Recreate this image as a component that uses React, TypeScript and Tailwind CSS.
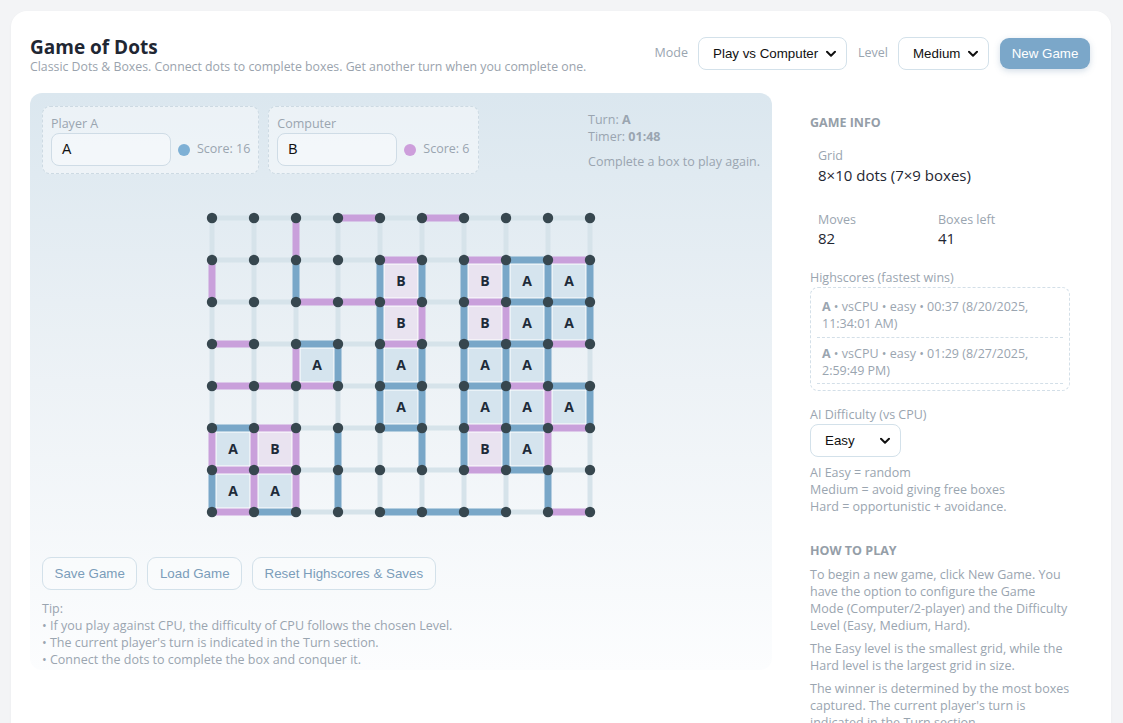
import React from "react";

const H = [
  "...b.b...",
  "....b.bab",
  "..bbb.baa",
  "b.a.b.aab",
  "bbb.a.aba",
  "ab..a.bab",
  "bb....ba.",
  "ba..aaa.b",
];
const V = [
  "..b.......",
  "b.a.aaaaaa",
  "....ababaa",
  "..baaaaaa.",
  "....aaaaba",
  "bbba.aaab.",
  "abba....a.",
];
const B = [
  ".........",
  "....B.BAA",
  "....B.BAA",
  "..A.A.AA.",
  "....A.AAA",
  "AB....BA.",
  "AA.......",
];

const S = 42;
const P = 10;
const BLUE = "#79a7c8";
const PURPLE = "#c9a0db";
const EMPTY = "#d6e3ea";

function col(c: string) {
  return c === "a" ? BLUE : c === "b" ? PURPLE : EMPTY;
}

function Board() {
  const w = 9 * S + 2 * P;
  const h = 7 * S + 2 * P;
  const items: React.ReactNode[] = [];
  B.forEach((row, r) =>
    row.split("").forEach((ch, c) => {
      if (ch === ".") return;
      const x = P + c * S;
      const y = P + r * S;
      items.push(
        <g key={`b${r}-${c}`}>
          <rect
            x={x + 4}
            y={y + 4}
            width={34}
            height={34}
            fill={ch === "A" ? "#d5e4ee" : "#e9e3f0"}
            stroke="#ffffff"
            strokeWidth={1}
          />
          <text
            x={x + 21}
            y={y + 26}
            textAnchor="middle"
            fontSize="14"
            fontWeight="700"
            fill="#1e2b3a"
            fontFamily="'Open Sans', sans-serif"
          >
            {ch}
          </text>
        </g>
      );
    })
  );
  H.forEach((row, r) =>
    row.split("").forEach((ch, c) => {
      const y = P + r * S;
      items.push(
        <line
          key={`h${r}-${c}`}
          x1={P + c * S}
          x2={P + (c + 1) * S}
          y1={y}
          y2={y}
          stroke={col(ch)}
          strokeWidth={ch === "." ? 5 : 7}
        />
      );
    })
  );
  V.forEach((row, r) =>
    row.split("").forEach((ch, c) => {
      const x = P + c * S;
      items.push(
        <line
          key={`v${r}-${c}`}
          x1={x}
          x2={x}
          y1={P + r * S}
          y2={P + (r + 1) * S}
          stroke={col(ch)}
          strokeWidth={ch === "." ? 5 : 7}
        />
      );
    })
  );
  for (let r = 0; r < 8; r++)
    for (let c = 0; c < 10; c++)
      items.push(<circle key={`d${r}-${c}`} cx={P + c * S} cy={P + r * S} r={5.2} fill="#37474f" />);
  return (
    <svg width={w} height={h} viewBox={`0 0 ${w} ${h}`}>
      {items}
    </svg>
  );
}

function Chevron() {
  return (
    <svg
      className="pointer-events-none absolute right-[10px] top-1/2 -translate-y-1/2"
      width="10"
      height="7"
      viewBox="0 0 10 7"
    >
      <path d="M1 1.2 L5 5.2 L9 1.2" fill="none" stroke="#111" strokeWidth="2" strokeLinecap="round" strokeLinejoin="round" />
    </svg>
  );
}

function Select({ value, w }: { value: string; w: string }) {
  return (
    <div className={`relative h-[33px] ${w} rounded-[8px] border border-[#d3e1ea] bg-white`}>
      <div className="flex h-full items-center pl-[14px] font-['Liberation_Sans',Arial,sans-serif] text-[13.33px] text-[#111]">
        {value}
      </div>
      <Chevron />
    </div>
  );
}

function PlayerCard({ label, value, color, score }: { label: string; value: string; color: string; score: string }) {
  return (
    <div className="rounded-[8px] border border-dashed border-[#cddae3] bg-white/45 px-[8px] pt-[9px] pb-[7px]">
      <div className="text-[12.5px] leading-[16px] text-[#9aa5b0]">{label}</div>
      <div className="mt-[1px] flex items-center whitespace-nowrap">
        <div className="flex h-[33px] w-[120px] items-center rounded-[8px] border border-[#cfdce6] bg-white/35 pl-[10px] font-['Liberation_Sans',Arial,sans-serif] text-[14px] text-[#111]">
          {value}
        </div>
        <span className="ml-[7px] h-[12px] w-[12px] shrink-0 rounded-full" style={{ background: color }} />
        <span className="ml-[7px] text-[12.5px] text-[#9aa5b0]">{score}</span>
      </div>
    </div>
  );
}

export default function App() {
  return (
    <div className="min-h-screen bg-[#f3f4f6] p-[11px] font-['Open_Sans',sans-serif]">
      <div className="w-[1100px] rounded-[16px] bg-white px-[19px] pt-[24px] pb-[30px] shadow-[0_1px_3px_rgba(0,0,0,0.04)]">
        {/* header */}
        <div className="flex items-start justify-between pr-[2px]">
          <div>
            <h1 className="text-[19px] font-bold leading-[24px] text-[#1f2733]">Game of Dots</h1>
            <p className="mt-[0px] text-[12.3px] leading-[16px] text-[#9aa3ad]">
              Classic Dots &amp; Boxes. Connect dots to complete boxes. Get another turn when you complete one.
            </p>
          </div>
          <div className="mt-[2px] flex items-center">
            <span className="mr-[10px] text-[12.5px] text-[#9aa5b0]">Mode</span>
            <Select value="Play vs Computer" w="w-[149px]" />
            <span className="ml-[11px] mr-[10px] text-[12.5px] text-[#9aa5b0]">Level</span>
            <Select value="Medium" w="w-[91px]" />
            <button className="ml-[11px] h-[31px] w-[90px] rounded-[9px] bg-[#7ba7c9] font-['Liberation_Sans',Arial,sans-serif] text-[13.33px] text-white shadow-[0_2px_6px_rgba(80,120,160,0.25)]">
              New Game
            </button>
          </div>
        </div>

        <div className="mt-[18px] flex items-start">
          {/* left panel */}
          <div className="w-[742px] rounded-[12px] bg-linear-to-b from-[#dbe7ef] via-[#edf2f6] to-[#fcfdfe] px-[12px] pt-[13px] pb-[2px]">
            <div className="flex items-start justify-between">
              <div className="flex gap-[9px]">
                <PlayerCard label="Player A" value="A" color="#7eb0d5" score="Score: 16" />
                <PlayerCard label="Computer" value="B" color="#cd9edb" score="Score: 6" />
              </div>
              <div className="pt-[5px] text-[12.5px] leading-[17px] text-[#9aa5b0]">
                <div>
                  Turn: <b className="font-bold">A</b>
                </div>
                <div>
                  Timer: <b className="font-bold">01:48</b>
                </div>
                <div className="mt-[8px]">Complete a box to play again.</div>
              </div>
            </div>
            <div className="mt-[34px] flex justify-center">
              <Board />
            </div>
            <div className="mt-[35px] flex gap-[10px] font-['Liberation_Sans',Arial,sans-serif] text-[13.33px] text-[#7b9dba]">
              <button className="h-[33px] rounded-[9px] border border-[#d3e1ea] bg-white/30 px-[11.5px]">Save Game</button>
              <button className="h-[33px] rounded-[9px] border border-[#d3e1ea] bg-white/30 px-[11.5px]">Load Game</button>
              <button className="h-[33px] rounded-[9px] border border-[#d3e1ea] bg-white/30 px-[11.5px]">Reset Highscores &amp; Saves</button>
            </div>
            <div className="mt-[10px] text-[12.5px] leading-[17px] text-[#9aa5b0]">
              <div>Tip:</div>
              <div>• If you play against CPU, the difficulty of CPU follows the chosen Level.</div>
              <div>• The current player's turn is indicated in the Turn section.</div>
              <div>• Connect the dots to complete the box and conquer it.</div>
            </div>
          </div>

          {/* right column */}
          <div className="ml-[38px] w-[260px] pt-[21px] text-[12.5px] leading-[17px] text-[#9aa5b0]">
            <div className="font-bold text-[#959ea8]">GAME INFO</div>
            <div className="mt-[16px] px-[8px]">
              <div>Grid</div>
              <div className="mt-[1px] text-[15px] leading-[20px] text-[#1f2733]">8×10 dots (7×9 boxes)</div>
            </div>
            <div className="mt-[26px] grid grid-cols-[120px_120px] px-[8px]">
              <div>
                <div>Moves</div>
                <div className="text-[15px] leading-[20px] text-[#1f2733]">82</div>
              </div>
              <div>
                <div>Boxes left</div>
                <div className="text-[15px] leading-[20px] text-[#1f2733]">41</div>
              </div>
            </div>
            <div className="mt-[21px]">Highscores (fastest wins)</div>
            <div className="mt-[1px] rounded-[8px] border border-dashed border-[#d3dfe8] px-[6px] pt-[3px] pb-[6px]">
              <div className="border-b border-dashed border-[#d3dfe8] px-[5px] pt-[7px] pb-[5px]">
                <b className="font-bold">A</b> • vsCPU • easy • 00:37 (8/20/2025, 11:34:01 AM)
              </div>
              <div className="border-b border-dashed border-[#d3dfe8] px-[5px] pt-[7px] pb-[4px]">
                <b className="font-bold">A</b> • vsCPU • easy • 01:29 (8/27/2025, 2:59:49 PM)
              </div>
            </div>
            <div className="mt-[15px]">AI Difficulty (vs CPU)</div>
            <div className="mt-[1px]">
              <Select value="Easy" w="w-[91px]" />
            </div>
            <div className="mt-[7px]">
              <div>AI Easy = random</div>
              <div>Medium = avoid giving free boxes</div>
              <div>Hard = opportunistic + avoidance.</div>
            </div>
            <div className="mt-[27px] font-bold text-[#959ea8]">HOW TO PLAY</div>
            <p className="mt-[7px]">
              To begin a new game, click New Game. You have the option to configure the Game Mode (Computer/2-player) and the Difficulty Level (Easy, Medium, Hard).
            </p>
            <p className="mt-[6px]">The Easy level is the smallest grid, while the Hard level is the largest grid in size.</p>
            <p className="mt-[6px]">
              The winner is determined by the most boxes captured. The current player's turn is indicated in the Turn section.
            </p>
          </div>
        </div>
      </div>
    </div>
  );
}
